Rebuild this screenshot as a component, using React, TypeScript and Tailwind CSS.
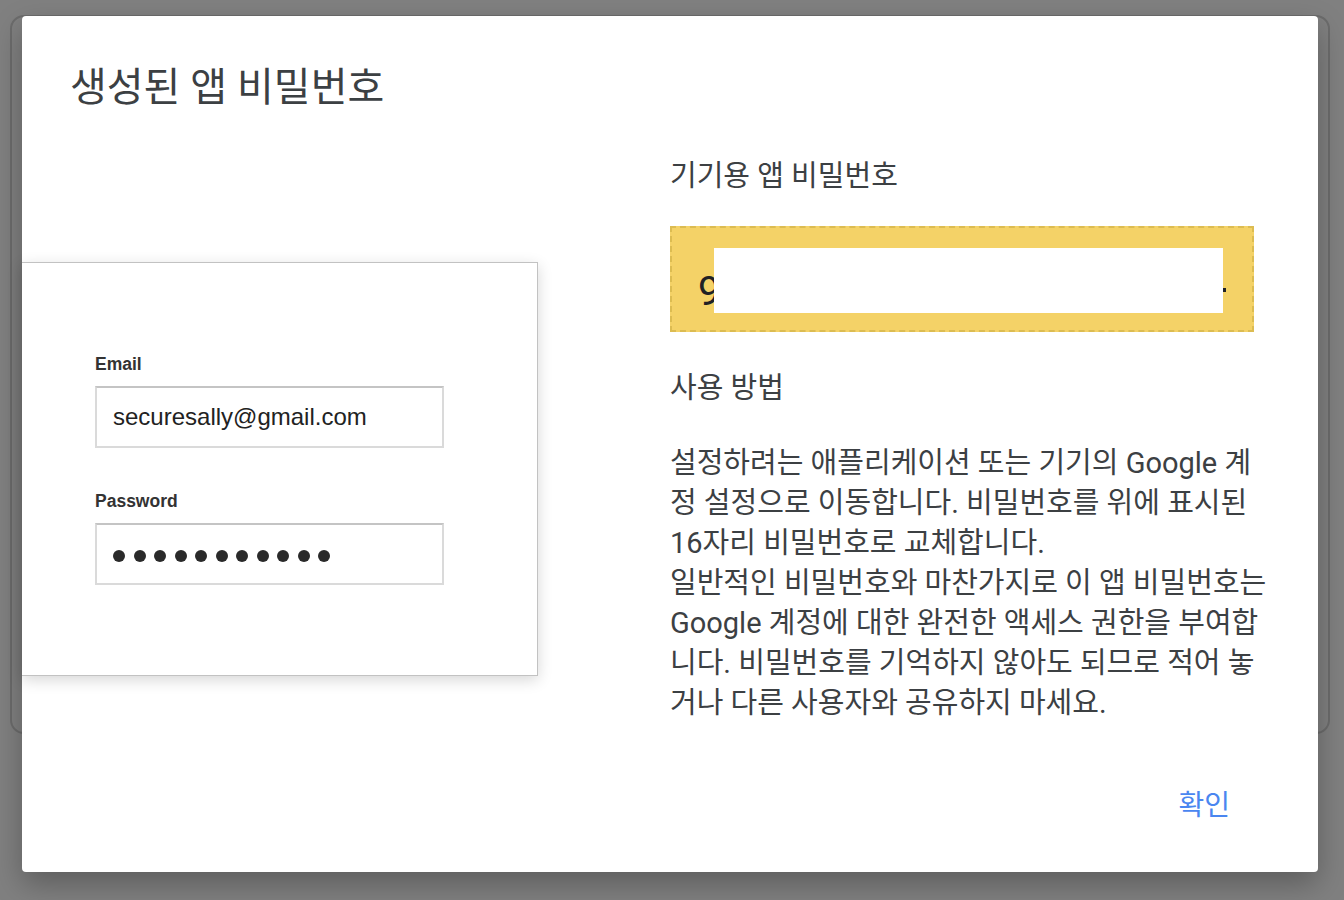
import React from "react";

const steps: string[] = [
  "설정하려는 애플리케이션 또는 기기의 Google 계",
  "정 설정으로 이동합니다. 비밀번호를 위에 표시된",
  "16자리 비밀번호로 교체합니다.",
  "일반적인 비밀번호와 마찬가지로 이 앱 비밀번호는",
  "Google 계정에 대한 완전한 액세스 권한을 부여합",
  "니다. 비밀번호를 기억하지 않아도 되므로 적어 놓",
  "거나 다른 사용자와 공유하지 마세요.",
];

const FakeField: React.FC<{ label: string; children: React.ReactNode; className?: string }> = ({
  label,
  children,
  className,
}) => (
  <div className={className}>
    <div className="text-[17.5px] font-bold leading-[20px] text-[#333333]">{label}</div>
    <div className="mt-[12px] flex h-[62px] w-[349px] items-center border-2 border-[#dadada] border-t-[#c4c4c4] pl-[16px]">
      {children}
    </div>
  </div>
);

const SignInPreview: React.FC = () => (
  <div
    className="mt-[150px] h-[414px] w-[516px] border border-l-0 border-[#c2c2c2] bg-white pl-[73px] pt-[91px] shadow-[0_4px_14px_rgba(0,0,0,0.16)]"
    style={{ fontFamily: '"Liberation Sans", Arial, sans-serif' }}
  >
    <FakeField label="Email">
      <span className="text-[24px] text-[#222222]">securesally@gmail.com</span>
    </FakeField>
    <FakeField label="Password" className="mt-[43px]">
      <div className="flex gap-[8.5px] pt-[4px]">
        {Array.from({ length: 11 }).map((_, i) => (
          <span key={i} className="h-[12px] w-[12px] rounded-full bg-[#2a2a2a]" />
        ))}
      </div>
    </FakeField>
  </div>
);

export default function App() {
  return (
    <div
      className="relative h-[900px] w-[1344px] overflow-hidden bg-[#808080] pl-[10px] pr-[14px] pt-[15px]"
      style={{ fontFamily: 'Roboto, "Noto Sans CJK KR", sans-serif' }}
    >
      {/* page card behind the overlay */}
      <div className="h-[719px] rounded-[14px] border-2 border-[#6c6c6c]" />

      {/* dialog */}
      <div className="absolute left-[22px] top-[16px] flex h-[856px] w-[1296px] flex-col rounded-[4px] bg-white shadow-[0_12px_30px_rgba(0,0,0,0.28)]">
        <h1 className="pl-[48px] pt-[48px] text-[40px] font-normal leading-[48px] text-[#3c4043]">
          생성된 앱 비밀번호
        </h1>

        <div className="flex">
          <SignInPreview />

          <div className="ml-[132px] w-[610px] text-[29px] text-[#3c4043]">
            <div className="mt-[46px] leading-[36px]">기기용 앱 비밀번호</div>

            <div className="relative mt-[32px] flex h-[106px] w-[584px] items-center border-2 border-dashed border-[#dcbc52] bg-[#f4d267] pl-[26px]">
              <span className="pt-[26px] text-[40px] leading-none text-[#202124]">9</span>
              {/* redacted code */}
              <div className="absolute left-[42px] top-[20px] h-[65px] w-[509px] bg-white" />
              <span className="absolute left-[551px] top-[60px] h-[4px] w-[3px] bg-[#202124]" />
            </div>

            <div className="mt-[38px] leading-[36px]">사용 방법</div>

            <div className="mt-[37px] leading-[40px]">
              {steps.map((line) => (
                <div key={line} className="whitespace-nowrap">
                  {line}
                </div>
              ))}
            </div>
          </div>
        </div>

        <div className="mt-auto flex justify-end pb-[46px] pr-[88px]">
          <button className="text-[28px] leading-[40px] text-[#4a86f0]">확인</button>
        </div>
      </div>
    </div>
  );
}
